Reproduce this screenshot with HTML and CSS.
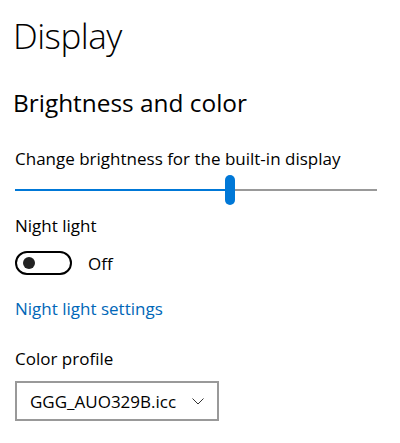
FILE: index.html
```html
<!doctype html>
<html>
<head>
    <meta charset="utf-8" />
    <title>Display</title>
    <link rel="stylesheet" href="styles.css">
</head>

<body>
    <main class="page">
        <h1 class="title">Display</h1>
        <h2 class="section">Brightness and color</h2>

        <div class="field brightness">
            <div class="field-label">Change brightness for the built-in display</div>
            <div class="slider">
                <div class="slider-fill" style="width: 210px"></div>
                <div class="slider-thumb"></div>
                <div class="slider-rest"></div>
            </div>
        </div>

        <div class="field night">
            <div class="field-label">Night light</div>
            <div class="toggle-row">
                <span class="toggle"><span class="toggle-knob"></span></span>
                <span class="toggle-state">Off</span>
            </div>
        </div>

        <a class="link" href="#">Night light settings</a>

        <div class="field profile">
            <div class="field-label">Color profile</div>
            <div class="select">
                <span class="select-value">GGG_AUO329B.icc</span>
                <svg class="chevron" width="12" height="7" viewBox="0 0 12 7">
                    <path d="M0.5 0.5 L6 6 L11.5 0.5" fill="none" stroke="#333" stroke-width="1"/>
                </svg>
            </div>
        </div>
    </main>
</body>

</html>
```

FILE: styles.css
```css
:root {
    --text: #000;
    --accent: #0078d7;
    --link: #0067b8;
    --track: #999;
}
html, body {
    background-color: #fff;
}
body {
    margin: 0;
    color: var(--text);
    font-family: 'Open Sans', 'Noto Sans', sans-serif;
}

.page {
    padding: 0 23px 0 15px;
}

.title {
    margin: 12px 0 0 -2px;
    font-size: 35px;
    font-weight: 300;
    line-height: 48px;
    letter-spacing: -0.5px;
}
.section {
    margin: 27px 0 0 -2px;
    font-size: 24.4px;
    font-weight: 400;
    line-height: 32px;
}

.field-label {
    font-size: 17px;
    line-height: 24px;
}
.brightness {
    margin-top: 28px;
}
    .slider {
        display: flex;
        align-items: center;
        height: 30px;
        margin-top: 4px;
    }
        .slider-fill {
            height: 2px;
            background-color: var(--accent);
        }
        .slider-thumb {
            width: 10px;
            height: 30px;
            border-radius: 5px;
            background-color: var(--accent);
        }
        .slider-rest {
            flex-grow: 1;
            height: 2px;
            background-color: var(--track);
        }

.night {
    margin-top: 9px;
}
    .toggle-row {
        display: flex;
        align-items: center;
        height: 24px;
        margin-top: 13px;
    }
        .toggle {
            display: flex;
            align-items: center;
            box-sizing: border-box;
            width: 57px;
            height: 24px;
            padding: 0 0 0 6px;
            border: 2px solid #000;
            border-radius: 12px;
        }
        .toggle-knob {
            width: 12px;
            height: 12px;
            border-radius: 50%;
            background-color: #222;
        }
        .toggle-state {
            margin-left: 16px;
            font-size: 17px;
        }

.link {
    display: block;
    margin-top: 22px;
    color: var(--link);
    font-size: 17px;
    line-height: 24px;
    text-decoration: none;
}

.profile {
    margin-top: 26px;
}
    .select {
        display: flex;
        align-items: center;
        justify-content: space-between;
        box-sizing: border-box;
        width: 204px;
        height: 40px;
        margin-top: 10px;
        padding: 0 13px 0 13px;
        border: 2px solid #999;
        font-size: 17px;
    }
```
